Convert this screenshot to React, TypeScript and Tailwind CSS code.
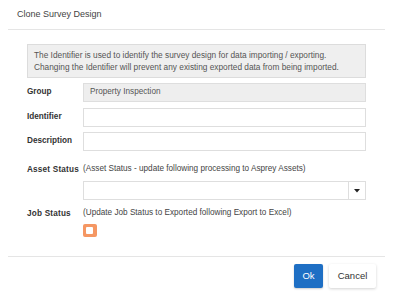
export default function App() {
  return (
    <div className="w-[401px] h-[304px] bg-white font-['Liberation_Sans',Arial,sans-serif] text-[#333]">
      <div className="mx-[8px] w-[377px] h-[297px] flex flex-col">
        <div className="h-[30px] px-[9px] flex items-center border-b border-[#e5e5e5]">
          <h4 className="text-[9px] text-[#444]">Clone Survey Design</h4>
        </div>

        <div className="px-[19px] pt-[14px] flex-1">
          <div className="h-[34px] border border-[#dcdcdc] bg-[#efefef] px-[6px] pt-[4px] text-[8.3px] leading-[12px] text-[#555]">
            <p>The Identifier is used to identify the survey design for data importing / exporting.</p>
            <p>Changing the Identifier will prevent any existing exported data from being imported.</p>
          </div>

          <div className="mt-[5px] grid grid-cols-[56px_1fr] items-center gap-y-[5.5px] text-[8.2px]">
            <label className="font-bold">Group</label>
            <div className="h-[19px] border border-[#dedede] bg-[#eeeeee] px-[6px] flex items-center text-[#555]">
              Property Inspection
            </div>

            <label className="font-bold">Identifier</label>
            <input className="h-[19px] border border-[#dedede] bg-white outline-none" />

            <label className="font-bold">Description</label>
            <input className="h-[19px] border border-[#dedede] bg-white outline-none" />
          </div>

          <div className="mt-[12px] grid grid-cols-[56px_1fr] text-[8.2px]">
            <label className="font-bold tracking-[0.2px] pt-[1px]">Asset Status</label>
            <div className="text-[#444] leading-[12px]">(Asset Status - update following processing to Asprey Assets)</div>
            <div />
            <div className="mt-[5px] h-[19px] border border-[#dedede] bg-white flex">
              <div className="flex-1" />
              <div className="w-[17px] border-l border-[#dedede] flex items-center justify-center">
                <svg width="6" height="4" viewBox="0 0 6 4">
                  <path d="M0 0 L6 0 L3 3.5 Z" fill="#222" />
                </svg>
              </div>
            </div>
          </div>

          <div className="mt-[7px] grid grid-cols-[56px_1fr] text-[8.2px]">
            <label className="font-bold tracking-[0.2px] pt-[1px]">Job Status</label>
            <div className="text-[#444] leading-[12px]">(Update Job Status to Exported following Export to Excel)</div>
            <div />
            <div className="mt-[3px]">
              <div className="w-[13.5px] h-[13.5px] rounded-[2px] bg-[#f59763] flex items-center justify-center">
                <div className="w-[7px] h-[7px] bg-white rounded-[1px]" />
              </div>
            </div>
          </div>
        </div>

        <div className="h-[41px] border-t border-[#e5e5e5] px-[9px] flex items-start justify-end gap-[6px] pt-[7px]">
          <button className="h-[24px] w-[29px] rounded-[2px] bg-[#1e6fc4] text-white text-[9.5px] shadow-[0_1px_2px_rgba(0,0,0,0.2)]">
            Ok
          </button>
          <button className="h-[24px] w-[47px] rounded-[2px] bg-white text-[#333] text-[9.5px] shadow-[0_1px_3px_rgba(0,0,0,0.18)]">
            Cancel
          </button>
        </div>
      </div>
    </div>
  );
}
